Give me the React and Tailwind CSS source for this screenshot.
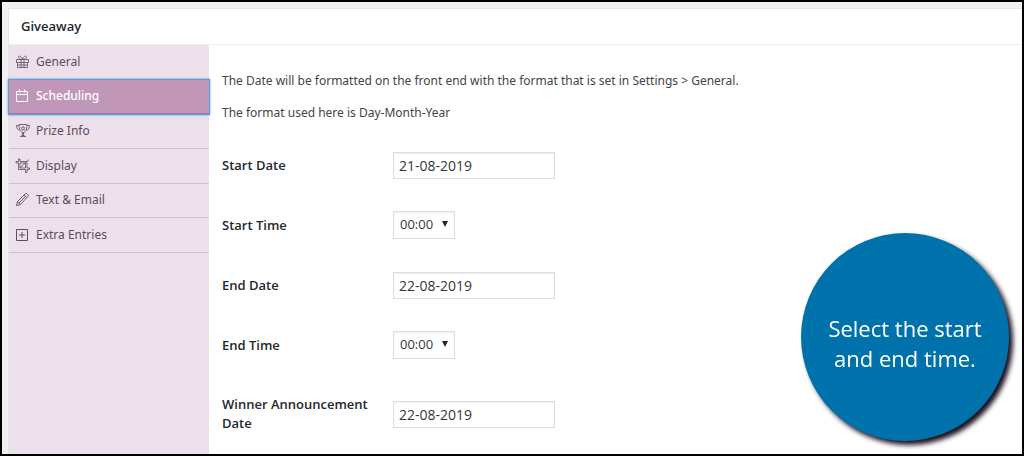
import { useState } from "react";

function Icon({ children }) {
  return (
    <svg
      viewBox="0 0 16 16"
      className="h-4 w-4 shrink-0"
      fill="none"
      stroke="currentColor"
      strokeWidth="1"
      strokeLinejoin="round"
      aria-hidden="true"
    >
      {children}
    </svg>
  );
}

const tabs = [
  {
    name: "General",
    icon: (
      <Icon>
        <path d="M1.500 5.500h12v3h-12zM2.500 8.500v5h10v-5M6 5.500v8M9 5.500v8M3 11h9" strokeWidth=".8" />
        <path d="M7.500 5.500C5.500 5.500 3.500 5 3.500 3.300S6.500 1.500 7.500 5.500C8.500 1.500 11.500 1.600 11.500 3.300S9.500 5.500 7.500 5.500z" strokeWidth=".8" />
      </Icon>
    ),
  },
  {
    name: "Scheduling",
    icon: (
      <Icon>
        <path d="M1.500 3.500h11v10h-11zM1.500 6.500h11M4.500 1.500v3M9.500 1.500v3" />
      </Icon>
    ),
  },
  {
    name: "Prize Info",
    icon: (
      <Icon>
        <path d="M4 1.500h8c0 5-1.500 8-4 8s-4-3-4-8zM4 2.500H1.500C1.500 5.500 2.500 7 5 7M12 2.500h2.500c0 3-1 4.500-3.500 4.500M7.500 9.500v3M8.500 9.500v3M5 13.500h6M6.500 12.500h3" strokeWidth=".8" />
        <path d="M8 3.300l.6 1.300 1.400.2-1 1 .2 1.400L8 6.500l-1.200.7.200-1.400-1-1 1.400-.2z" strokeWidth=".7" />
      </Icon>
    ),
  },
  {
    name: "Display",
    icon: (
      <Icon>
        <path d="M3.500 1v2.500H1v1.500h2.500v6.500h7V14.500h1.500v-3h2.500v-1.500H12V3.500H5V1zM5 5h5.500v5H5zM5 10l9-8.500" strokeWidth=".8" />
      </Icon>
    ),
  },
  {
    name: "Text & Email",
    icon: (
      <Icon>
        <path d="M1.500 13.500l1-4 7.500-7.500c.8-.8 1.800-.6 2.600.2s.9 1.700 0 2.600L5.300 12.500zM2.500 9.500l2.800 3M9 3l2.800 2.800M4 10.900l6.500-6.500" strokeWidth=".9" />
      </Icon>
    ),
  },
  {
    name: "Extra Entries",
    icon: (
      <Icon>
        <path d="M1.500 2.500h11v11h-11zM7 5v6M4 8h6" />
      </Icon>
    ),
  },
];

const fields = [
  { id: "start-date", label: "Start Date", type: "date", value: "21-08-2019" },
  { id: "start-time", label: "Start Time", type: "time", value: "00:00" },
  { id: "end-date", label: "End Date", type: "date", value: "22-08-2019" },
  { id: "end-time", label: "End Time", type: "time", value: "00:00" },
  { id: "winner-date", label: "Winner Announcement Date", type: "date", value: "22-08-2019" },
];

const times = ["00:00", "06:00", "12:00", "18:00"];

function Field({ id, label, type, value }) {
  return (
    <div className="flex min-h-15 items-center">
      <label htmlFor={id} className="w-[171px] shrink-0 py-5 pr-2 text-[13px] leading-[19px] font-semibold text-[#23282d]">
        {label}
      </label>
      {type === "date" ? (
        <input
          id={id}
          type="text"
          defaultValue={value}
          className="h-[27px] w-[162px] border border-[#dddddd] bg-white px-[5px] text-sm text-[#32373c] shadow-[inset_0_1px_2px_rgba(0,0,0,0.07)]"
        />
      ) : (
        <div className="relative">
          <select
            id={id}
            defaultValue={value}
            className="block h-7 w-[62px] appearance-none border border-[#dddddd] bg-white pl-1.5 text-[13px] text-[#32373c] shadow-[inset_0_1px_2px_rgba(0,0,0,0.07)]"
          >
            {times.map((time) => (
              <option key={time}>{time}</option>
            ))}
          </select>
          <svg viewBox="0 0 6 6" className="pointer-events-none absolute top-2.5 right-[7px] h-1.5 w-1.5" fill="#23282d" aria-hidden="true">
            <path d="M0 0h6L3 6z" />
          </svg>
        </div>
      )}
    </div>
  );
}

export default function App() {
  const [active, setActive] = useState("Scheduling");
  return (
    <div className="flex min-h-screen flex-col border-2 border-black bg-[#f1f1f1] pt-1.5 pl-1.5 font-['Open_Sans',sans-serif]">
      <main className="flex grow flex-col border-t border-l border-[#e5e5e5] bg-white">
        <h1 className="border-b border-[#eeeeee] px-3 py-2 text-[13px] leading-[19px] font-semibold text-[#23282d]">
          Giveaway
        </h1>
        <div className="flex grow">
          <nav className="w-50 shrink-0 bg-[#ece1eb] font-['Noto_Sans',sans-serif] text-xs">
            <ul className="grid h-52 auto-rows-fr">
              {tabs.map(({ name, icon }) => (
                <li key={name} className="flex">
                  <button
                    type="button"
                    onClick={() => setActive(name)}
                    className={
                      name === active
                        ? "z-10 flex grow items-center gap-[5px] border-b border-[#a77d9f] bg-[#c097b8] pl-1.5 font-medium text-white shadow-[0_0_0_1px_#5b9dd9,0_0_2px_1px_rgba(30,140,190,0.8)]"
                        : "flex grow items-center gap-[5px] border-b border-[#d5c0d0] pl-1.5 text-[#5f4a60]"
                    }
                  >
                    {icon}
                    {name}
                  </button>
                </li>
              ))}
            </ul>
          </nav>
          <section className="grow px-[13px] pt-[26px]">
            <div className="font-['Noto_Sans',sans-serif] text-xs leading-5 text-[#444444]">
              <p>The Date will be formatted on the front end with the format that is set in Settings &gt; General.</p>
              <p className="mt-3">The format used here is Day-Month-Year</p>
            </div>
            <form className="mt-3">
              {fields.map((field) => (
                <Field key={field.id} {...field} />
              ))}
            </form>
          </section>
        </div>
      </main>
      <aside className="fixed right-[15px] bottom-[15px] flex h-52 w-52 items-center justify-center rounded-full bg-[#0072ab] pt-3 text-center text-[22px] leading-[30px] text-white shadow-[4px_4px_5px_#1b1020]">
        <p>
          Select the start
          <br />
          and end time.
        </p>
      </aside>
    </div>
  );
}
